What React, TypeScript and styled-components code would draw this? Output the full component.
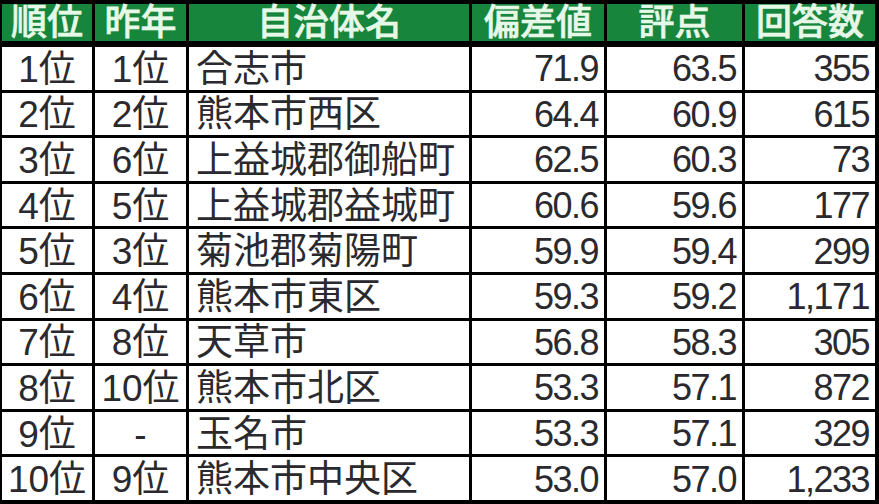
import styled, { createGlobalStyle } from 'styled-components';

const GlobalStyle = createGlobalStyle`
  html,
  body {
    margin: 0;
    padding: 0;
    background: #000;
  }
  #root {
    width: 879px;
    height: 504px;
  }
`;

const Sheet = styled.div`
  box-sizing: border-box;
  width: 879px;
  height: 504px;
  padding: 4px 4px 4px 2px;
  background: #000;
  display: grid;
  grid-template-columns: 90px 91px 280px 132px 135px 130px;
  grid-template-rows: 40px repeat(10, 1fr);
  gap: 3px;
  font-family: 'Liberation Sans', 'Noto Sans CJK JP', sans-serif;
`;

const HeaderCell = styled.div`
  margin-bottom: 3px;
  background: #17853c;
  color: #e6f8e8;
  font-size: 36px;
  font-weight: 500;
  -webkit-text-stroke: 0.6px #e6f8e8;
  line-height: 37px;
  text-align: center;
  white-space: nowrap;
`;

type Align = 'left' | 'center' | 'right';

const Cell = styled.div<{ $align: Align }>`
  background: #fff;
  color: #2a2a2e;
  font-size: 37px;
  line-height: 1;
  display: flex;
  align-items: center;
  justify-content: ${(p) =>
    p.$align === 'left' ? 'flex-start' : p.$align === 'right' ? 'flex-end' : 'center'};
  padding: ${(p) =>
    p.$align === 'left' ? '2px 0 0 7px' : p.$align === 'right' ? '2px 6px 0 0' : '2px 0 0 0'};
  overflow: hidden;
  white-space: nowrap;
`;

const Num = styled.span`
  font-size: 36px;
  letter-spacing: -1.5px;
`;

const headers = ['順位', '昨年', '自治体名', '偏差値', '評点', '回答数'];

const rows = [
  ['1位', '1位', '合志市', '71.9', '63.5', '355'],
  ['2位', '2位', '熊本市西区', '64.4', '60.9', '615'],
  ['3位', '6位', '上益城郡御船町', '62.5', '60.3', '73'],
  ['4位', '5位', '上益城郡益城町', '60.6', '59.6', '177'],
  ['5位', '3位', '菊池郡菊陽町', '59.9', '59.4', '299'],
  ['6位', '4位', '熊本市東区', '59.3', '59.2', '1,171'],
  ['7位', '8位', '天草市', '56.8', '58.3', '305'],
  ['8位', '10位', '熊本市北区', '53.3', '57.1', '872'],
  ['9位', '-', '玉名市', '53.3', '57.1', '329'],
  ['10位', '9位', '熊本市中央区', '53.0', '57.0', '1,233'],
];

const aligns: Align[] = ['center', 'center', 'left', 'right', 'right', 'right'];

export default function App() {
  return (
    <>
      <GlobalStyle />
      <Sheet>
        {headers.map((h) => (
          <HeaderCell key={h}>{h}</HeaderCell>
        ))}
        {rows.map((row, i) =>
          row.map((value, j) => (
            <Cell key={`${i}-${j}`} $align={aligns[j]}>
              {j >= 3 ? <Num>{value}</Num> : value}
            </Cell>
          ))
        )}
      </Sheet>
    </>
  );
}
